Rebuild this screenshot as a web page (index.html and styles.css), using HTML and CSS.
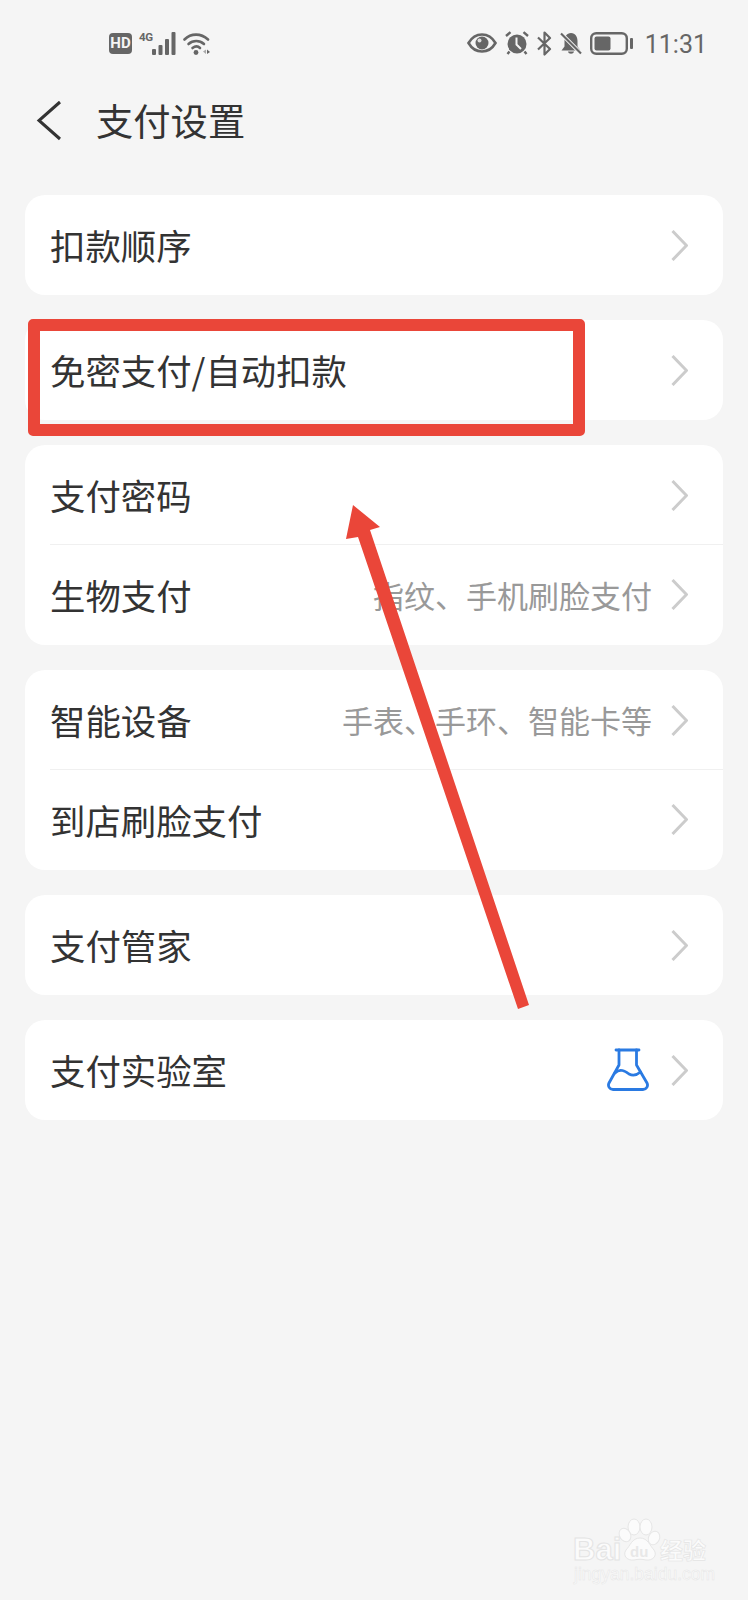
FILE: index.html
```html
<!DOCTYPE html>
<html lang="zh-CN">
<head>
<meta charset="utf-8">
<title>支付设置</title>
<link rel="stylesheet" href="styles.css">
</head>
<body>
<div class="page">
  <div class="status">
    <div class="status-group status-left">
      <span class="hd">HD</span>
      <span class="signal">
        <span class="net">4G</span>
        <svg class="icon" width="24" height="23" viewBox="0 0 24 23"><g fill="#666"><rect x="0" y="17" width="4" height="6" rx="1"/><rect x="6.500" y="13" width="4" height="10" rx="1"/><rect x="13" y="7" width="4" height="16" rx="1"/><rect x="19.500" y="0" width="4" height="23" rx="1"/></g></svg>
      </span>
      <svg class="icon" width="27" height="23" viewBox="0 0 27 23"><g fill="none" stroke="#666" stroke-width="2.600" stroke-linecap="round"><path d="M1.500 7.500C8 1 18 1 25 7.500"/><path d="M5.500 12C10 8 16.500 8 21 12"/><path d="M9.500 16C12 14 15 14 17 16"/></g><circle cx="13" cy="20.500" r="2.400" fill="#666"/><path d="M20 19.500L23 17.500V22Z" fill="#aaa"/><path d="M24 17.500L27 20 24 22Z" fill="#666"/></svg>
    </div>
    <div class="status-group status-right">
      <svg class="icon" width="30" height="20" viewBox="0 0 30 20"><path d="M1.500 10C5 4 10 1.500 15 1.500S25 4 28.500 10C25 16 20 18.500 15 18.500S5 16 1.500 10Z" fill="none" stroke="#666" stroke-width="2.600"/><circle cx="15" cy="10" r="6.500" fill="#666"/><circle cx="12.500" cy="7.500" r="2" fill="#ddd"/></svg>
      <svg class="icon" width="24" height="24" viewBox="0 0 24 24"><circle cx="12" cy="13" r="9.500" fill="#666"/><path d="M11.500 6.500V13.500L16 18" fill="none" stroke="#f5f5f5" stroke-width="2"/><path d="M1 5L5.500 1.200M23 5L18.500 1.200M4.500 20.500L2.500 23M19.500 20.500L21.500 23" stroke="#666" stroke-width="2.400" fill="none"/></svg>
      <svg class="icon" width="15" height="25" viewBox="0 0 15 25"><path d="M1 6.500L13 18 7.500 23.500V1.500L13 7 1 18.500" fill="none" stroke="#666" stroke-width="2.200" stroke-linejoin="round"/></svg>
      <svg class="icon" width="22" height="23" viewBox="0 0 22 23"><path d="M11 1C15.500 1 17.500 5 17.500 9V14.500L20.500 18.500H1.500L4.500 14.500V9C4.500 5 6.500 1 11 1Z" fill="#666"/><path d="M8 19.500H14C13.500 22.500 8.500 22.500 8 19.500Z" fill="#666"/><path d="M1 1.500L21 21.500" stroke="#f5f5f5" stroke-width="4"/><path d="M1 1.500L21 21.500" stroke="#666" stroke-width="2.200"/></svg>
      <svg class="icon" width="43" height="23" viewBox="0 0 43 23"><rect x="1.200" y="1.200" width="35.600" height="20.600" rx="5" fill="none" stroke="#666" stroke-width="2.400"/><rect x="4.500" y="4.500" width="16" height="14" rx="2" fill="#666"/><rect x="40" y="6" width="3" height="11" rx="1" fill="#666"/></svg>
      <span class="time">11:31</span>
    </div>
  </div>

  <div class="header">
    <svg class="back" width="26" height="41" viewBox="0 0 26 41"><path d="M24 2L3 20.500 24 39" fill="none" stroke="#333" stroke-width="3"/></svg>
    <h1 class="title">支付设置</h1>
  </div>

  <div class="list">
    <div class="card">
      <div class="row"><span class="label">扣款顺序</span><svg class="chev" width="17" height="31" viewBox="0 0 17 31"><path d="M1.500 1L15.500 15.500 1.500 30" fill="none" stroke="#ccc" stroke-width="3"/></svg></div>
    </div>
    <div class="card">
      <div class="row"><span class="label">免密支付/自动扣款</span><svg class="chev" width="17" height="31" viewBox="0 0 17 31"><path d="M1.500 1L15.500 15.500 1.500 30" fill="none" stroke="#ccc" stroke-width="3"/></svg></div>
    </div>
    <div class="card">
      <div class="row"><span class="label">支付密码</span><svg class="chev" width="17" height="31" viewBox="0 0 17 31"><path d="M1.500 1L15.500 15.500 1.500 30" fill="none" stroke="#ccc" stroke-width="3"/></svg></div>
      <div class="row"><span class="label">生物支付</span><span class="value">指纹、手机刷脸支付</span><svg class="chev" width="17" height="31" viewBox="0 0 17 31"><path d="M1.500 1L15.500 15.500 1.500 30" fill="none" stroke="#ccc" stroke-width="3"/></svg></div>
    </div>
    <div class="card">
      <div class="row"><span class="label">智能设备</span><span class="value">手表、手环、智能卡等</span><svg class="chev" width="17" height="31" viewBox="0 0 17 31"><path d="M1.500 1L15.500 15.500 1.500 30" fill="none" stroke="#ccc" stroke-width="3"/></svg></div>
      <div class="row"><span class="label">到店刷脸支付</span><svg class="chev" width="17" height="31" viewBox="0 0 17 31"><path d="M1.500 1L15.500 15.500 1.500 30" fill="none" stroke="#ccc" stroke-width="3"/></svg></div>
    </div>
    <div class="card">
      <div class="row"><span class="label">支付管家</span><svg class="chev" width="17" height="31" viewBox="0 0 17 31"><path d="M1.500 1L15.500 15.500 1.500 30" fill="none" stroke="#ccc" stroke-width="3"/></svg></div>
    </div>
    <div class="card">
      <div class="row"><span class="label">支付实验室</span>
        <svg class="flask" width="45" height="44" viewBox="0 0 45 44"><g fill="none" stroke="#2a7ae2" stroke-width="2.800" stroke-linecap="round" stroke-linejoin="round"><path d="M9 2H32"/><path d="M12 2V17L2 35C0.500 38 2.500 41.500 6 41.500H36C39.500 41.500 41.500 38 40 35L29.500 17V2"/><path d="M8 25C13 20 18 23 22 26C26 28 30 27 33.500 24"/></g></svg>
        <svg class="chev" width="17" height="31" viewBox="0 0 17 31"><path d="M1.500 1L15.500 15.500 1.500 30" fill="none" stroke="#ccc" stroke-width="3"/></svg></div>
    </div>
  </div>

  <div class="mark-box"></div>
  <svg class="arrow" width="748" height="1600" viewBox="0 0 748 1600"><path d="M353 505L380 527 370 530 529 1005 518 1009 358 537 346 539Z" fill="#ea4639"/></svg>

  <svg class="watermark" width="170" height="85" viewBox="560 1510 170 85">
    <g class="wm-shape">
      <ellipse cx="634" cy="1527" rx="6" ry="8"/>
      <ellipse cx="646" cy="1527" rx="6" ry="8"/>
      <ellipse cx="625" cy="1535" rx="5.500" ry="7" transform="rotate(-30 625 1535)"/>
      <ellipse cx="654" cy="1538" rx="5.500" ry="7" transform="rotate(25 654 1538)"/>
      <path d="M640 1538C648 1538 650 1546 654 1550C658 1556 652 1561 646 1560C642 1559 638 1559 634 1560C628 1561 622 1556 626 1550C630 1546 632 1538 640 1538Z"/>
    </g>
    <text class="wm-du" x="630" y="1557">du</text>
    <text class="wm-bai" x="573" y="1560">Bai</text>
    <text class="wm-cn" x="660" y="1559">经验</text>
    <text class="wm-url" x="574" y="1580">jingyan.baidu.com</text>
  </svg>
</div>
</body>
</html>
```

FILE: styles.css
```css
* { box-sizing: border-box; }
html, body { margin: 0; padding: 0; }
body {
  background: #f5f5f5;
  font-family: "Noto Sans CJK SC", "Noto Sans", sans-serif;
  color: #333;
}
.page {
  position: relative;
  width: 748px;
  height: 1600px;
  overflow: hidden;
}
.status {
  display: flex;
  justify-content: space-between;
  align-items: center;
  height: 86px;
  padding: 0 41px 0 109px;
}
.status-group { display: flex; align-items: center; }
.status-left { gap: 7px; }
.status-right { gap: 8px; }
.icon { display: block; flex: none; }
.hd {
  width: 23px;
  height: 21px;
  border-radius: 4px;
  background: #666;
  color: #f5f5f5;
  font: bold 15px/21px "Roboto", "Liberation Sans", sans-serif;
  text-align: center;
}
.signal { display: flex; align-items: flex-end; height: 23px; }
.net {
  align-self: flex-start;
  width: 13px;
  color: #666;
  font: bold 11.500px/11px "Roboto", "Liberation Sans", sans-serif;
  letter-spacing: -0.3px;
}
.time {
  margin: 3px 0 0 4px;
  color: #666;
  font: 400 25px/30px "Roboto", "Liberation Sans", sans-serif;
}
.header {
  display: flex;
  align-items: center;
  height: 68px;
  padding-left: 36px;
  gap: 34px;
}
.back { display: block; flex: none; }
.title {
  margin: 0;
  font-size: 37.300px;
  font-weight: 400;
  line-height: 50px;
  color: #333;
}
.list {
  display: flex;
  flex-direction: column;
  gap: 25px;
  margin-top: 41px;
  padding: 0 25px;
}
.card {
  background: #fff;
  border-radius: 20px;
  overflow: hidden;
}
.row {
  display: flex;
  align-items: center;
  height: 100px;
  margin-left: 25px;
  padding-right: 35px;
}
.row + .row {
  height: 101px;
  margin-top: -1px;
  padding-bottom: 1px;
  border-top: 1px solid #f0f0f0;
}
.label {
  flex: 1;
  font-size: 35.400px;
  line-height: 48px;
  color: #333;
}
.value {
  margin-right: 19px;
  font-size: 31px;
  line-height: 44px;
  color: #999;
}
.chev { display: block; flex: none; }
.flask { display: block; flex: none; margin-right: 19px; }
.mark-box {
  position: absolute;
  left: 28px;
  top: 319px;
  width: 557px;
  height: 117px;
  border: 12.500px solid #ea4639;
  border-radius: 5px;
}
.arrow { position: absolute; left: 0; top: 0; }
.watermark { position: absolute; left: 560px; top: 1510px; }
.wm-shape { fill: #fbfbfb; stroke: #e6e6e6; stroke-width: 1; }
.wm-du { font: bold 15px "Liberation Sans", sans-serif; fill: #e8e8e8; }
.wm-bai { font: bold 31px "Liberation Sans", sans-serif; fill: #fbfbfb; stroke: #e4e4e4; stroke-width: 1; }
.wm-cn { font: 700 23px "Noto Sans CJK SC", sans-serif; fill: #fbfbfb; stroke: #e4e4e4; stroke-width: 0.6; }
.wm-url { font: 17.500px "Liberation Sans", sans-serif; fill: #fbfbfb; stroke: #e6e6e6; stroke-width: 0.5; }
```
